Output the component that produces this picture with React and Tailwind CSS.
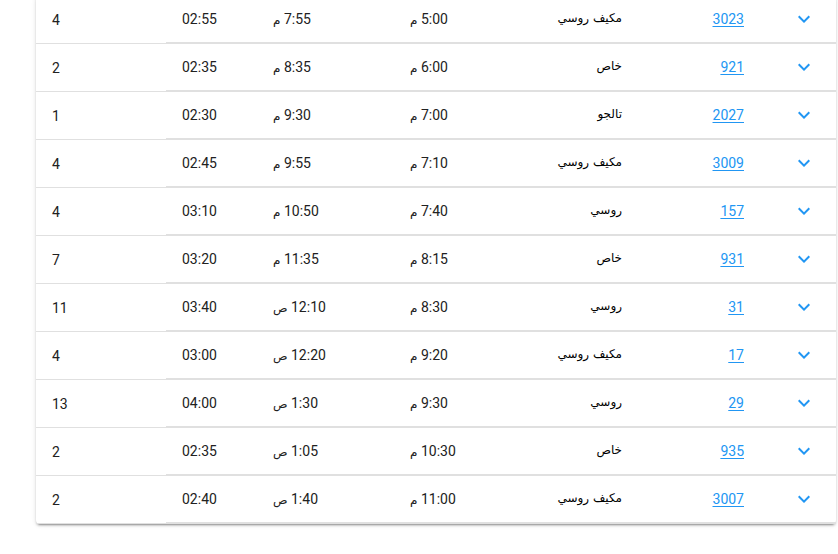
const trips = [
  { stops: '4', duration: '02:55', arrive: ['7:55', 'م'], depart: ['5:00', 'م'], type: 'مكيف روسي', train: '3023' },
  { stops: '2', duration: '02:35', arrive: ['8:35', 'م'], depart: ['6:00', 'م'], type: 'خاص', train: '921' },
  { stops: '1', duration: '02:30', arrive: ['9:30', 'م'], depart: ['7:00', 'م'], type: 'تالجو', train: '2027' },
  { stops: '4', duration: '02:45', arrive: ['9:55', 'م'], depart: ['7:10', 'م'], type: 'مكيف روسي', train: '3009' },
  { stops: '4', duration: '03:10', arrive: ['10:50', 'م'], depart: ['7:40', 'م'], type: 'روسي', train: '157' },
  { stops: '7', duration: '03:20', arrive: ['11:35', 'م'], depart: ['8:15', 'م'], type: 'خاص', train: '931' },
  { stops: '11', duration: '03:40', arrive: ['12:10', 'ص'], depart: ['8:30', 'م'], type: 'روسي', train: '31' },
  { stops: '4', duration: '03:00', arrive: ['12:20', 'ص'], depart: ['9:20', 'م'], type: 'مكيف روسي', train: '17' },
  { stops: '13', duration: '04:00', arrive: ['1:30', 'ص'], depart: ['9:30', 'م'], type: 'روسي', train: '29' },
  { stops: '2', duration: '02:35', arrive: ['1:05', 'ص'], depart: ['10:30', 'م'], type: 'خاص', train: '935' },
  { stops: '2', duration: '02:40', arrive: ['1:40', 'ص'], depart: ['11:00', 'م'], type: 'مكيف روسي', train: '3007' },
];

function ChevronDown() {
  return (
    <svg className="w-6 h-6 text-[#2196f3]" viewBox="0 0 24 24" fill="currentColor">
      <path d="M7.41,8.58L12,13.17L16.59,8.58L18,10L12,16L6,10L7.41,8.58Z" />
    </svg>
  );
}

function Time({ value }) {
  return (
    <span dir="rtl">
      {value[0]} <span className="text-[12px] font-['DejaVu_Sans',sans-serif]">{value[1]}</span>
    </span>
  );
}

export default function App() {
  return (
    <div className="w-[838px] h-[554px] overflow-hidden bg-white font-['Roboto',sans-serif] text-sm text-[#212121]">
      <div className="ml-[36px] -mt-[4px] w-[800px] bg-white rounded-[4px] shadow-[0_3px_1px_-2px_rgba(0,0,0,0.2),0_2px_2px_0_rgba(0,0,0,0.14),0_1px_5px_0_rgba(0,0,0,0.12)]">
        {trips.map((t, i) => (
          <div
            key={i}
            className="grid grid-cols-[130px_91px_137px_126px_118px_122px_1fr] h-[48px] items-stretch"
          >
            {/* stops */}
            <div className="flex items-center pl-4 border-b border-[#e0e0e0]">{t.stops}</div>
            {/* duration */}
            <div className="flex items-center pl-4 border-b-2 border-[#e0e0e0]">{t.duration}</div>
            {/* arrival */}
            <div className="flex items-center pl-4 border-b-2 border-[#e0e0e0]">
              <Time value={t.arrive} />
            </div>
            {/* departure */}
            <div className="flex items-center pl-4 border-b-2 border-[#e0e0e0]">
              <Time value={t.depart} />
            </div>
            {/* type */}
            <div dir="rtl" className="flex items-center pr-4 border-b-2 border-[#e0e0e0] text-black text-[12px] font-['DejaVu_Sans',sans-serif]">
              {t.type}
            </div>
            {/* train number */}
            <div className="flex items-center justify-end pr-4 border-b-2 border-[#e0e0e0]">
              <a href="#" className="text-[#2196f3] underline underline-offset-2">{t.train}</a>
            </div>
            {/* expand */}
            <div className="flex items-center pl-[32px] border-b-2 border-[#e0e0e0]">
              <ChevronDown />
            </div>
          </div>
        ))}
      </div>
    </div>
  );
}
